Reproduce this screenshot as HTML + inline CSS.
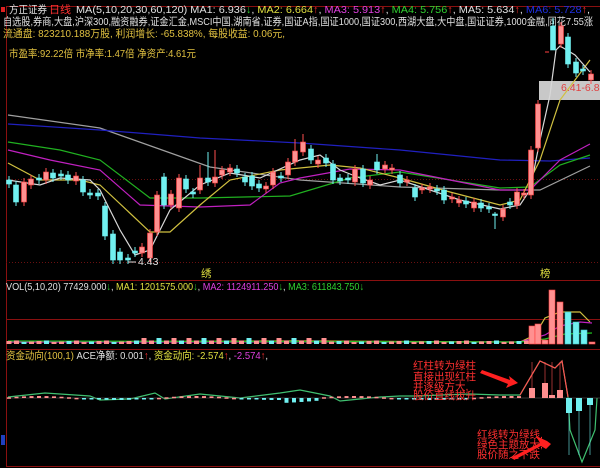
<!DOCTYPE html>
<html><head><meta charset="utf-8"><style>
html,body{margin:0;padding:0;background:#000;width:600px;height:468px;overflow:hidden}
svg{display:block}
text{font-family:"Liberation Sans","Noto Sans CJK SC",sans-serif;font-size:10.5px}
</style></head><body>
<svg id="s" width="600" height="468" viewBox="0 0 600 468" xmlns="http://www.w3.org/2000/svg">
<rect width="600" height="468" fill="#000"/>
<g stroke="#8a1010" stroke-width="1">
<line x1="6" y1="6.5" x2="600" y2="6.5"/>
<line x1="6.5" y1="6" x2="6.5" y2="466"/>
<line x1="6" y1="280.5" x2="600" y2="280.5"/>
<line x1="6" y1="319.5" x2="600" y2="319.5"/>
<line x1="6" y1="349.5" x2="600" y2="349.5"/>
<line x1="6" y1="466.5" x2="600" y2="466.5"/>
</g>
<g stroke="#6a1010" stroke-width="1" stroke-dasharray="1,2">
<line x1="6" y1="179.5" x2="600" y2="179.5"/>
<line x1="6" y1="262.5" x2="600" y2="262.5"/>
</g>
<rect x="1" y="7" width="4" height="5" fill="#e02020"/>
<rect x="1" y="435" width="4" height="10" fill="#2040c0"/>
<text x="9" y="13" fill="#e0e0e0" textLength="38" lengthAdjust="spacingAndGlyphs">方正证券</text><text x="49" y="13" fill="#ff3030" textLength="22" lengthAdjust="spacingAndGlyphs">日线</text>
<text x="76" y="13" fill="#e0e0e0" textLength="514" lengthAdjust="spacingAndGlyphs">MA(5,10,20,30,60,120) MA1: 6.936<tspan fill="#30d030">↓</tspan>, <tspan fill="#e0e040">MA2: 6.664</tspan><tspan fill="#ff3030">↑</tspan>, <tspan fill="#e040e0">MA3: 5.913</tspan><tspan fill="#ff3030">↑</tspan>, <tspan fill="#30d030">MA4: 5.756</tspan><tspan fill="#ff3030">↑</tspan>, MA5: 5.634<tspan fill="#ff3030">↑</tspan>, <tspan fill="#2030e0">MA6: 5.728</tspan><tspan fill="#ff3030">↑</tspan>,</text>
<text x="3" y="25" fill="#e0e0e0" textLength="590" lengthAdjust="spacingAndGlyphs">自选股,券商,大盘,沪深300,融资融券,证金汇金,MSCI中国,湖南省,证券,国证A指,国证1000,国证300,西湖大盘,大中盘,国证证券,1000金融,同花7.55涨</text>
<text x="3" y="37" fill="#e0c040" textLength="282" lengthAdjust="spacingAndGlyphs">流通盘: 823210.188万股, 利润增长: -65.838%, 每股收益: 0.06元,</text>
<text x="9" y="57" fill="#e0c040" textLength="187" lengthAdjust="spacingAndGlyphs">市盈率:92.22倍 市净率:1.47倍 净资产:4.61元</text>
<text x="6" y="290" fill="#e0e0e0" textLength="358" lengthAdjust="spacingAndGlyphs">VOL(5,10,20) 77429.000<tspan fill="#30d030">↓</tspan>, <tspan fill="#e0e040">MA1: 1201575.000</tspan><tspan fill="#30d030">↓</tspan>, <tspan fill="#e040e0">MA2: 1124911.250</tspan><tspan fill="#30d030">↓</tspan>, <tspan fill="#30d030">MA3: 611843.750</tspan><tspan fill="#30d030">↓</tspan></text>
<text x="6" y="359" fill="#e0e0e0" textLength="262" lengthAdjust="spacingAndGlyphs"><tspan fill="#e0c040">资金动向(100,1)</tspan> ACE净额: 0.001<tspan fill="#ff3030">↑</tspan>, <tspan fill="#e0e040">资金动向: -2.574</tspan><tspan fill="#ff3030">↑</tspan>, <tspan fill="#e040e0">-2.574</tspan><tspan fill="#ff3030">↑</tspan>,</text>
<text x="201" y="277" fill="#e0e040" font-size="11">绣</text>
<text x="540" y="277" fill="#e0e040" font-size="11">榜</text>
<rect x="539" y="81" width="61" height="19" fill="#c8c8c8"/>
<text x="561" y="91" fill="#e04040" font-size="9">6.41-6.88</text>
<g id="ma" fill="none" stroke-width="1.2"></g>
<g id="c"></g>
<text x="138" y="265" fill="#e0e0e0">4.43</text>
<line x1="128" y1="262" x2="136" y2="262" stroke="#ddd"/>
<g fill="#ff3030" font-size="9">
<text x="413" y="369">红柱转为绿柱</text>
<text x="413" y="380">直接出现红柱</text>
<text x="413" y="390">并逐级方大,</text>
<text x="413" y="399">股价直线拔升</text>
<text x="477" y="438">红线转为绿线,</text>
<text x="477" y="448">绿色主题放大,</text>
<text x="477" y="458">股价随之下跌</text>
</g>
<polygon points="482,370 510,380 509,376 518,383 506,388 508,384 480,373" fill="#ff2020"/>
<polygon points="536,436 547,441 551,444 546,449 541,446 514,460 512,457 540,443" fill="#ff2020"/>
</svg>
<script>
const NS="http://www.w3.org/2000/svg",g=document.getElementById('c'),m=document.getElementById('ma');
function el(t,a,p){const e=document.createElementNS(NS,t);for(const k in a)e.setAttribute(k,a[k]);(p||g).appendChild(e);return e}
const C=[[9,180,184,'c'],[16,185,202,'c'],[24,182,202,'r'],[31,179,185,'r'],[39,178,180,'c'],[46,172,180,'r'],[53,173,178,'c'],[61,174,176,'c'],[68,175,180,'c'],[76,176,181,'r'],[83,180,192,'c'],[90,193,195,'c'],[98,193,196,'c'],[105,206,236,'c'],[113,234,260,'c'],[120,252,260,'c'],[128,258,260,'c'],[135,251,253,'c'],[142,247,253,'r'],[150,233,258,'r'],[157,195,232,'r'],[164,177,205,'c'],[171,194,205,'r'],[179,178,208,'r'],[186,179,189,'c'],[193,192,194,'c'],[200,178,190,'r',165],[208,178,182,'c',152],[215,177,183,'r',150],[222,170,175,'r'],[230,168,172,'r'],[237,169,173,'c'],[245,177,182,'c'],[252,176,186,'c'],[259,184,188,'c'],[266,186,189,'r'],[273,172,185,'r'],[281,176,178,'c'],[288,162,175,'r'],[295,151,162,'r',139],[303,142,152,'r',134],[311,149,160,'c'],[318,160,164,'r'],[326,158,163,'c'],[333,164,180,'c'],[340,178,181,'c'],[348,178,180,'c'],[355,169,182,'r'],[363,169,183,'c'],[370,180,185,'r'],[377,162,170,'c',154],[385,165,169,'r'],[392,168,170,'r'],[400,175,183,'c'],[407,180,182,'r'],[415,188,197,'c'],[422,188,190,'r'],[430,187,189,'r'],[437,189,191,'c'],[444,190,200,'c'],[452,197,199,'r'],[459,200,203,'r'],[466,201,204,'c'],[474,202,208,'r'],[481,203,208,'c'],[489,207,209,'c'],[495,214,215,'c',212,229],[503,209,217,'r'],[510,202,205,'c'],[517,192,205,'r'],[524,193,195,'r'],[531,150,195,'r'],[538,104,148,'r'],[553,26,50,'c',18,50],[561,26,44,'r'],[568,37,64,'c'],[576,62,73,'c'],[583,69,71,'c'],[591,74,80,'r']];
C.forEach(k=>{const[x,a,b,t,h,l]=k;const col=t=='c'?'#70f0f0':'#ff9090';const st=t=='c'?'#70f0f0':'#ff4040';
el('line',{x1:x,x2:x,y1:h||a-4,y2:l||b+4,stroke:t=='c'?'#70f0f0':'#ff5050'});
el('rect',{x:x-2.5,y:a,width:5,height:Math.max(1.5,b-a),fill:col,stroke:st,'stroke-width':0.6});});
el('line',{x1:545,x2:549,y1:52,y2:52,stroke:'#ff4040'});
const L=[['#a0a0a0','8,115 100,128 210,167 300,180 400,187 500,190 540,190 590,166'],
['#2020c0','8,124 100,130 200,138 300,143 400,150 500,160 550,161 590,158'],
['#20b020','8,142 60,150 100,160 150,198 200,198 290,196 350,178 400,172 450,180 500,188 530,187 560,165 590,155'],
['#c020c0','8,150 50,160 100,170 140,205 200,207 250,205 280,183 300,178 350,169 400,170 450,180 500,190 530,190 560,160 590,144'],
['#d0c040','8,163 40,180 80,180 100,185 150,232 170,232 200,205 230,180 280,170 330,165 360,168 400,178 450,192 500,205 520,200 540,160 560,100 590,60'],
['#d8d8d8','8,180 40,185 60,178 90,180 100,190 120,230 135,255 150,250 170,210 200,185 230,173 260,178 300,160 320,155 340,170 360,178 380,185 400,180 430,190 460,200 500,209 520,205 530,190 540,140 550,95 556,50 560,46 575,55 590,72']];
L.forEach(([c,p])=>el('polyline',{points:p,stroke:c},m));
for(let x=9;x<530;x+=7.5){const big=x>140&&x<330;const h=big?(3+((x*7)%5)):2+((x*3)%2);const cy=(Math.floor(x/7.5)%3==0)?'#70f0f0':'#ff9090';
el('rect',{x:x-2.5,y:344-h,width:5,height:h,fill:cy});}
[[532,326,'#ff9090'],[538,324,'#ff9090'],[545,340,'#ff9090'],[552,290,'#ff9090'],[560,302,'#ff9090'],[568,312,'#70f0f0'],[576,322,'#70f0f0'],[584,330,'#70f0f0'],[592,342,'#ff9090']].forEach(([x,y,c])=>el('rect',{x:x-3,y:y,width:6,height:344-y,fill:c,stroke:c=='#70f0f0'?'#40c0c0':'#ff4040','stroke-width':.6}));
el('polyline',{points:'8,342 300,341 520,342 535,335 545,318 560,312 580,312 590,322',stroke:'#d0c040',fill:'none'},m);
el('polyline',{points:'8,342 520,342 545,335 560,326 580,322 592,323',stroke:'#c020c0',fill:'none'},m);
el('polyline',{points:'8,341 520,342 545,339 565,334 592,333',stroke:'#20c020',fill:'none'},m);
el('line',{x1:6,x2:600,y1:398,y2:398,stroke:'#666','stroke-width':.6});
for(let x=9;x<520;x+=7.5){const s=Math.sin(x/25)*2+(x>280&&x<320?-3:0);const c=s<0?'#70f0f0':'#ff9090';el('rect',{x:x-2,y:s<0?398:398-Math.abs(s),width:4,height:Math.max(1.5,Math.abs(s)),fill:c});}
el('polyline',{points:'8,397 45,393 90,396 100,400 130,399 155,393 165,399 200,394 240,398 280,393 300,390 330,396 340,401 360,399 380,397 400,396 420,396 440,395 470,394 500,395 520,395 540,361 555,368 562,361 568,397 570,430 582,462 595,430 597,398',stroke:'#40c070',fill:'none'},m);
el('polyline',{points:'520,395 540,361 555,368 562,361 568,397',stroke:'#ff5050',fill:'none'},m);
[[532,388],[545,383],[552,395],[560,390]].forEach(([x,y])=>{el('line',{x1:x,x2:x,y1:362,y2:398,stroke:'#ff5050','stroke-width':.6});el('rect',{x:x-3,y:y,width:6,height:398-y,fill:'#ff9090'})});
[[569,413],[579,411],[590,405]].forEach(([x,y])=>{el('rect',{x:x-3,y:398,width:6,height:y-398,fill:'#70f0f0'});el('line',{x1:x,x2:x,y1:398,y2:455,stroke:'#70f0f0','stroke-width':.6})});
</script>
</body></html>
